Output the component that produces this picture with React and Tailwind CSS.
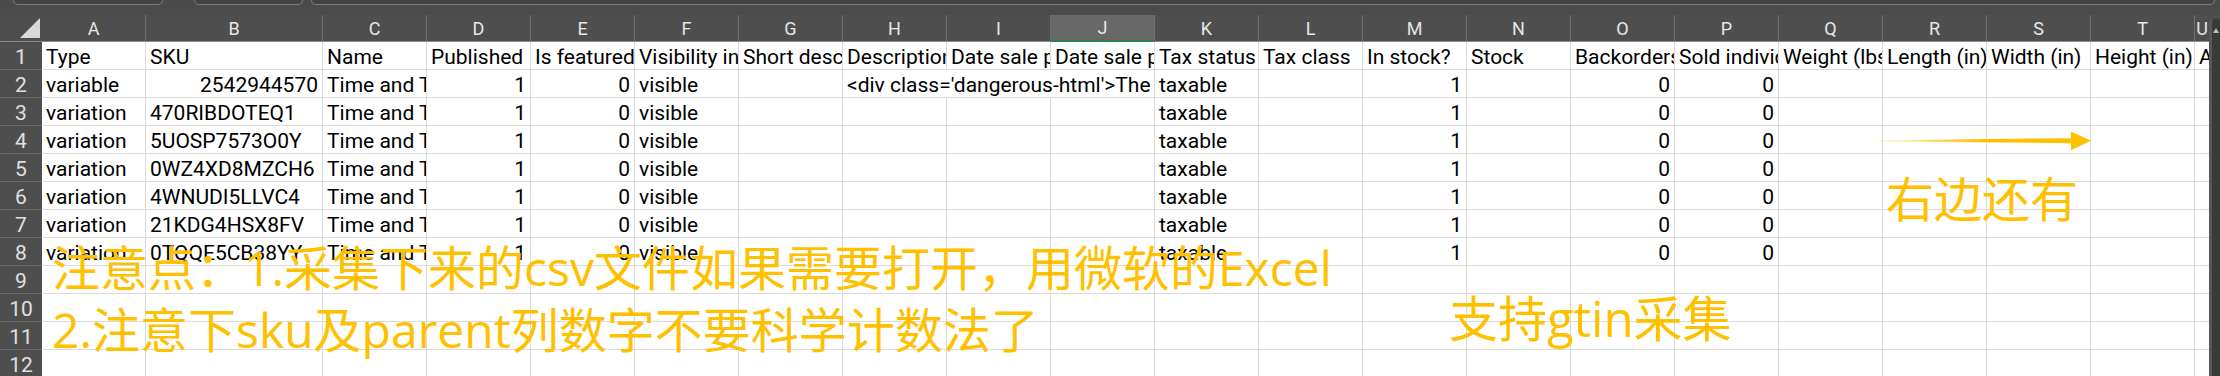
import React from 'react';

const HEAD = ['A','B','C','D','E','F','G','H','I','J','K','L','M','N','O','P','Q','R','S','T','U'];
const R1 = ['Type','SKU','Name','Published','Is featured?','Visibility in catalog','Short description','Description','Date sale price starts','Date sale price ends','Tax status','Tax class','In stock?','Stock','Backorders allowed?','Sold individually?','Weight (lbs)','Length (in)','Width (in)','Height (in)','Allow customer reviews?'].map((t) => ({ t }));

const num = (t) => ({ t, r: true });
const E = { t: '' };

const variation = (sku) => [
  { t: 'variation' }, { t: sku }, { t: 'Time and Tide Watch' }, num('1'), num('0'), { t: 'visible' },
  E, E, E, E, { t: 'taxable' }, E, num('1'), E, num('0'), num('0'), E, E, E, E, E,
];

const row2 = [
  { t: 'variable' }, num('2542944570'), { t: 'Time and Tide Watch' }, num('1'), num('0'), { t: 'visible' },
  E, { t: "<div class='dangerous-html'>The Time and Tide", span: true }, { t: 'taxable' }, E, num('1'), E, num('0'), num('0'), E, E, E, E, E,
];

const SKUS = ['470RIBDOTEQ1', '5UOSP7573O0Y', '0WZ4XD8MZCH6', '4WNUDI5LLVC4', '21KDG4HSX8FV', '0TQQE5CB38YY'];
const empty = () => Array.from({ length: 21 }, () => E);

const ROWS = [R1, row2, ...SKUS.map(variation), empty(), empty(), empty(), empty()];

function Cell({ c, last }) {
  return (
    <div
      className={`h-[28px] bg-white border-b border-[#dadada] overflow-hidden whitespace-nowrap px-[4px] pt-[5px] leading-[21px] text-[21px] text-black ${last ? '' : 'border-r'} ${c.r ? 'text-right' : ''} ${c.span ? 'col-span-3' : ''}`}
    >
      {c.t}
    </div>
  );
}

export default function App() {
  return (
    <div className="relative w-[2220px] h-[376px] overflow-hidden bg-[#4e4e4e] font-['Roboto',sans-serif]">
      {/* top strip with boxes */}
      <div className="h-[15px] flex items-start bg-[#4b4b4b]">
        <div className="ml-[13px] w-[150px] h-[5px] border border-t-0 border-[#7a7a7a] rounded-b-[5px] bg-[#444444]" />
        <div className="ml-[31px] w-[109px] h-[5px] border border-t-0 border-[#7a7a7a] rounded-b-[5px] bg-[#444444]" />
        <div className="ml-[8px] mr-[5px] flex-1 h-[5px] border border-t-0 border-[#7a7a7a] rounded-b-[5px] bg-[#444444]" />
      </div>

      <div className="flex">
        <div className="w-[2209px]">
          <div className="grid grid-cols-[42px_104px_177px_repeat(18,104px)_14px]">
            {/* header row */}
            <div className="h-[27px] bg-[#4e4e4e] border-b border-[#8c8c8c] flex items-end justify-end pr-[2px] pb-[3px]">
              <svg width="20" height="20" viewBox="0 0 20 20">
                <polygon points="0,20 20,20 20,0" fill="#d9d9d9" />
              </svg>
            </div>
            {HEAD.map((h, i) => (
              <div
                key={h}
                className={`h-[27px] flex items-center justify-center text-[18px] text-[#e6e6e6] ${i === 20 ? '' : 'border-r border-r-[#6e6e6e]'} ${h === 'J' ? 'bg-[#686868] border-b-2 border-b-[#2f7d4f]' : 'bg-[#4e4e4e] border-b border-b-[#8c8c8c]'}`}
              >
                {h}
              </div>
            ))}

            {ROWS.map((row, ri) => (
              <React.Fragment key={ri}>
                <div className="h-[28px] bg-[#4e4e4e] border-b border-[#6a6a6a] text-center text-[21px] text-[#e0e0e0] pt-[5px] leading-[21px]">
                  {ri + 1}
                </div>
                {row.map((c, ci) => (
                  <Cell key={ci} c={c} last={ci === row.length - 1} />
                ))}
              </React.Fragment>
            ))}
          </div>
        </div>

        {/* vertical scrollbar */}
        <div className="w-[11px] h-[361px] pt-[4px] bg-[#4e4e4e] flex flex-col">
          <div className="flex-1 bg-[#3a3a3a] border-l-[3px] border-[#585858] rounded-tl-[5px] flex justify-center pt-[9px]">
            <svg width="6" height="5" viewBox="0 0 6 5">
              <polygon points="3,0 6,5 0,5" fill="#bdbdbd" />
            </svg>
          </div>
        </div>
      </div>

      {/* annotations */}
      <svg className="absolute left-[1876px] top-[131px]" width="216" height="20" viewBox="0 0 216 20">
        <defs>
          <linearGradient id="ag" x1="0" y1="0" x2="1" y2="0">
            <stop offset="0" stopColor="#FFC000" stopOpacity="0.1" />
            <stop offset="0.55" stopColor="#FFC000" stopOpacity="1" />
            <stop offset="1" stopColor="#FFC000" stopOpacity="1" />
          </linearGradient>
        </defs>
        <polygon points="0,9.2 196,7.2 196,12.2 0,10.4" fill="url(#ag)" />
        <polygon points="195,0.5 215,9.8 195,19.2" fill="#FFC000" />
      </svg>

      <div className="absolute left-[52px] top-[237px] text-[48px] leading-[62px] text-[#FFC000] whitespace-nowrap font-['Open_Sans','Noto_Sans_CJK_SC',sans-serif]">
        <div>注意点：1.采集下来的csv文件如果需要打开，用微软的Excel</div>
        <div>2.注意下sku及parent列数字不要科学计数法了</div>
      </div>

      <div className="absolute left-[1449px] top-[292px] text-[49px] leading-[52px] text-[#FFC000] whitespace-nowrap font-['Open_Sans','Noto_Sans_CJK_SC',sans-serif]">
        支持gtin采集
      </div>

      <div className="absolute left-[1886px] top-[173px] text-[48px] leading-[52px] text-[#FFC000] whitespace-nowrap font-['Open_Sans','Noto_Sans_CJK_SC',sans-serif]">
        右边还有
      </div>
    </div>
  );
}
